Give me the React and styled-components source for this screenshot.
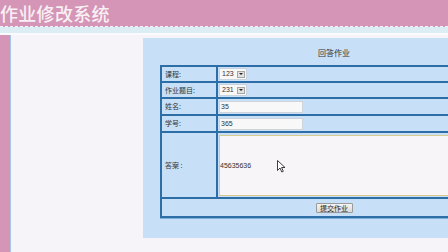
import React from 'react';
import styled, { createGlobalStyle } from 'styled-components';

const GlobalStyle = createGlobalStyle`
  html, body {
    margin: 0;
    padding: 0;
    background: #f6f4f8;
    overflow: hidden;
  }
  body {
    font-family: "Liberation Sans", "Noto Sans CJK SC", sans-serif;
  }
`;

const Page = styled.div`
  width: 448px;
  height: 252px;
  display: flex;
  flex-direction: column;
  overflow: hidden;
`;

const Header = styled.div`
  height: 26px;
  flex: none;
  background: #d595b6;
  display: flex;
  align-items: center;
  border-bottom: 1px dashed #eef4f8;
`;

const Title = styled.h1`
  margin: 0;
  font-family: "Noto Sans CJK SC", sans-serif;
  font-size: 18px;
  font-weight: 500;
  color: #f8f0f5;
  letter-spacing: 0.3px;
  line-height: 26px;
`;

const Stripe = styled.div`
  height: 6px;
  flex: none;
  background: #dcedf3;
  border-bottom: 2px solid #fbfbfd;
`;

const Body = styled.div`
  flex: 1;
  display: flex;
  min-height: 0;
`;

const Side = styled.div`
  width: 10px;
  flex: none;
  background: #d595b6;
  border-right: 1px solid #a9c6e8;
`;

const Main = styled.div`
  flex: none;
  width: 437px;
  padding: 3px 0 0 132px;
  box-sizing: border-box;
`;

const Panel = styled.div`
  width: 382px;
  height: 200px;
  background: #c7e0f7;
  padding: 0 17px;
  box-sizing: border-box;
`;

const PanelTitle = styled.div`
  font-family: "Noto Sans CJK SC", sans-serif;
  font-size: 8px;
  color: #333;
  text-align: center;
  height: 27px;
  line-height: 29px;
`;

const Form = styled.table`
  width: 348px;
  table-layout: fixed;
  border-collapse: collapse;
  border: 2px solid #2d6ea6;
  box-shadow: 0 1px 0 #7fb0d8;
  line-height: 0;
`;

const Row = styled.tr`
  height: ${p => p.$h}px;
`;

const Label = styled.td`
  width: 56px;
  height: ${p => p.$h}px;
  box-sizing: border-box;
  padding: 0 0 0 3px;
  border: 0 solid #2d6ea6;
  border-width: 2px 2px 0 0;
  font-family: "Noto Sans CJK SC", sans-serif;
  font-size: 7px;
  line-height: 9px;
  color: #333;
  vertical-align: middle;
  white-space: nowrap;
`;

const Field = styled.td`
  padding: 0 0 0 1px;
  border: 0 solid #2d6ea6;
  border-width: 2px 0 0 0;
  vertical-align: middle;
  position: relative;
`;

const Footer = styled.td`
  height: 17px;
  padding: 0;
  border-top: 2px solid #2d6ea6;
  text-align: center;
  vertical-align: middle;
`;

const Select = styled.div`
  display: flex;
  width: fit-content;
  align-items: center;
  gap: 3px;
  height: 10px;
  padding: 0 1px 0 2px;
  background: #f8f8f8;
  border: 1px solid #c9d3dd;
  font-size: 7px;
  line-height: 10px;
  color: #333;
`;

const Arrow = styled.span`
  width: 8px;
  height: 7px;
  background: #e2e2e2;
  border: 1px solid #a6a6a6;
  box-sizing: border-box;
  display: flex;
  align-items: center;
  justify-content: center;
  &::after {
    content: '';
    border-left: 2px solid transparent;
    border-right: 2px solid transparent;
    border-top: 2px solid #222;
  }
`;

const Input = styled.div`
  width: 81px;
  height: 10px;
  line-height: 10px;
  padding-left: 1px;
  background: #f8f8f9;
  border: 1px solid #cfd4da;
  font-size: 7px;
  color: #333;
`;

const Answer = styled.div`
  height: 59px;
  margin: 1px 0 1px;
  display: flex;
  align-items: center;
  background: #f7f5f8;
  border: 1px solid #d8c98c;
  border-right: none;
  font-size: 7px;
  line-height: 9px;
  color: #333;
`;

const Button = styled.button`
  display: inline-block;
  vertical-align: middle;
  height: 10px;
  width: 37px;
  padding: 0;
  border: 1px solid #9a9a9a;
  border-radius: 1px;
  background: linear-gradient(#f4f4f4, #dadada);
  font-family: "Noto Sans CJK SC", sans-serif;
  font-size: 7px;
  line-height: 8px;
  color: #222;
`;

const Pointer = styled.svg`
  position: absolute;
  left: 59px;
  top: 27px;
`;

export default function App() {
  return (
    <Page>
      <GlobalStyle />
      <Header>
        <Title>作业修改系统</Title>
      </Header>
      <Stripe />
      <Body>
        <Side />
        <Main>
          <Panel>
            <PanelTitle>回答作业</PanelTitle>
            <Form>
              <tbody>
                <Row $h={16}>
                  <Label $h={16}>课程:</Label>
                  <Field><Select>123<Arrow /></Select></Field>
                </Row>
                <Row $h={16}>
                  <Label $h={16}>作业题目:</Label>
                  <Field><Select>231<Arrow /></Select></Field>
                </Row>
                <Row $h={17}>
                  <Label $h={17}>姓名:</Label>
                  <Field><Input>35</Input></Field>
                </Row>
                <Row $h={17}>
                  <Label $h={17}>学号:</Label>
                  <Field><Input>365</Input></Field>
                </Row>
                <Row $h={66}>
                  <Label $h={66}>答案 :</Label>
                  <Field>
                    <Answer>45635636</Answer>
                    <Pointer width="9" height="13" viewBox="0 0 9 13">
                      <path d="M0.5 0.5 L0.5 10.5 L3 8 L4.8 12 L6.3 11.3 L4.6 7.5 L8 7.5 Z" fill="#fff" stroke="#111" strokeWidth="0.8" strokeLinejoin="round" />
                    </Pointer>
                  </Field>
                </Row>
                <Row $h={17}>
                  <Footer colSpan={2}><Button>提交作业</Button></Footer>
                </Row>
              </tbody>
            </Form>
          </Panel>
        </Main>
      </Body>
    </Page>
  );
}
